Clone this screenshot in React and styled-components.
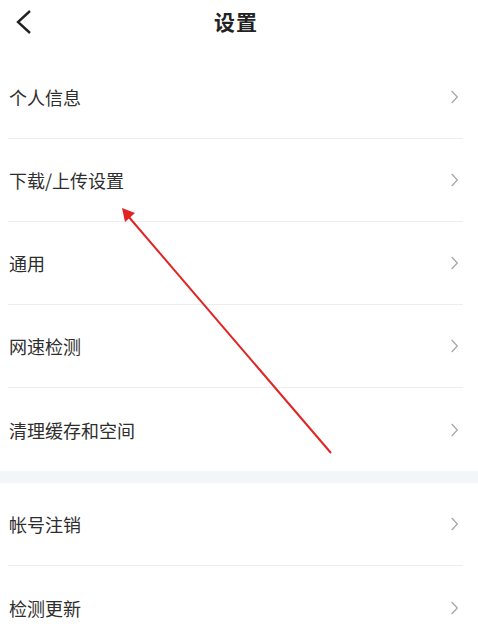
import React from 'react'
import styled, { createGlobalStyle } from 'styled-components'

const GlobalStyle = createGlobalStyle`
  html, body {
    margin: 0;
    padding: 0;
    background: #ffffff;
  }

  body {
    font-family: "Noto Sans CJK SC", "Noto Sans", sans-serif;
  }
`

const Page = styled.div`
  position: relative;
  width: 478px;
  height: 640px;
  overflow: hidden;
  background: #ffffff;
`

const Header = styled.div`
  display: flex;
  align-items: center;
  justify-content: center;
  position: relative;
  height: 46px;
  margin-bottom: 10px;
`

const BackButton = styled.button`
  position: absolute;
  left: 11px;
  top: 6px;
  width: 28px;
  height: 32px;
  padding: 0;
  border: none;
  background: none;
  display: flex;
  align-items: center;
  justify-content: center;
`

const Title = styled.h1`
  margin: 0;
  font-size: 21px;
  font-weight: 700;
  color: #222222;
  letter-spacing: 1px;
  transform: translate(-3px, -2px);
`

const Group = styled.div`
  display: flex;
  flex-direction: column;
`

const Row = styled.div`
  display: flex;
  align-items: center;
  justify-content: space-between;
  height: ${(p) => (p.last ? '83px' : '82px')};
  margin: 0 15px 0 8px;
  padding: 0 5px 0 1px;
  border-bottom: ${(p) => (p.last ? 'none' : '1px solid #ededed')};
`

const Label = styled.span`
  font-size: 18px;
  color: #2e2e2e;
  line-height: 1;
`

const Band = styled.div`
  height: 12px;
  background: #f3f6f9;
`

const Annotation = styled.svg`
  position: absolute;
  left: 0;
  top: 0;
  pointer-events: none;
`

const Chevron = () => (
  <svg width="7" height="14" viewBox="0 0 7 14">
    <path d="M0.7 1 L6.3 7 L0.7 13" fill="none" stroke="#a9a9a9" strokeWidth="1.3" />
  </svg>
)

const firstGroup = ['个人信息', '下载/上传设置', '通用', '网速检测', '清理缓存和空间']
const secondGroup = ['帐号注销', '检测更新']

const App = () => (
  <>
    <GlobalStyle />
    <Page>
      <Header>
        <BackButton>
          <svg width="20" height="26" viewBox="0 0 20 26">
            <path d="M15 2 L3 13 L15 24" fill="none" stroke="#222222" strokeWidth="2.4" />
          </svg>
        </BackButton>
        <Title>设置</Title>
      </Header>
      <Group>
        {firstGroup.map((item, i) => (
          <Row key={item} last={i === firstGroup.length - 1}>
            <Label>{item}</Label>
            <Chevron />
          </Row>
        ))}
      </Group>
      <Band />
      <Group>
        {secondGroup.map((item, i) => (
          <Row key={item} last={i === secondGroup.length - 1}>
            <Label>{item}</Label>
            <Chevron />
          </Row>
        ))}
      </Group>
      {/* red arrow drawn over the list */}
      <Annotation width="478" height="640" viewBox="0 0 478 640">
        <line x1="331" y1="453" x2="128" y2="216" stroke="#e02424" strokeWidth="2" />
        <polygon points="122,208 125,222 135,213" fill="#e02424" />
      </Annotation>
    </Page>
  </>
)

export default App
